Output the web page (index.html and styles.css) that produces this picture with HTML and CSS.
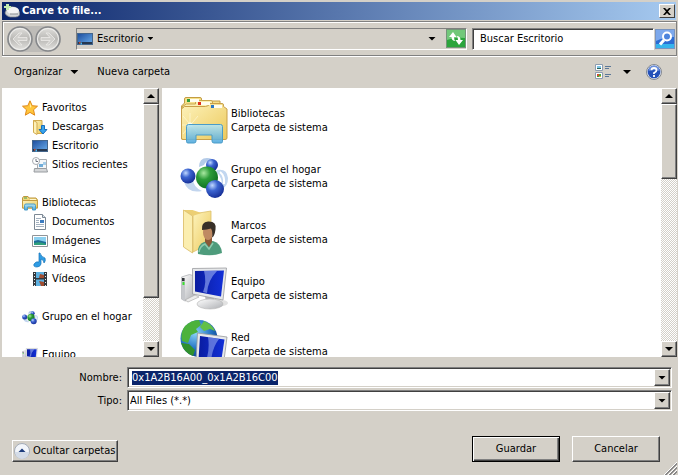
FILE: index.html
```
<!DOCTYPE html>
<html lang="es">
<head>
<meta charset="UTF-8" />
<meta name="viewport" content="width=device-width, initial-scale=1" />
<title>Carve to file...</title>
<link rel="stylesheet" href="styles.css">
</head>
<body>

<svg class="defs" aria-hidden="true">
  <defs>
    <linearGradient id="gFolder" x1="0" y1="0" x2="1" y2="1"><stop offset="0" stop-color="#fdf3bc"/><stop offset="1" stop-color="#ecc95c"/></linearGradient>
    <linearGradient id="gStand" x1="0" y1="0" x2="0" y2="1"><stop offset="0" stop-color="#b8e6f2"/><stop offset="1" stop-color="#4aa6dc"/></linearGradient>
    <linearGradient id="gDesk" x1="0" y1="0" x2="1" y2="1"><stop offset="0" stop-color="#1c4c9c"/><stop offset="1" stop-color="#6cb0ee"/></linearGradient>
    <linearGradient id="gScreen" x1="0" y1="0" x2="1" y2="0"><stop offset="0" stop-color="#0a1ca0"/><stop offset="1" stop-color="#1230d8"/></linearGradient>
    <linearGradient id="gMetal" x1="0" y1="0" x2="1" y2="1"><stop offset="0" stop-color="#ffffff"/><stop offset="1" stop-color="#aeb0b4"/></linearGradient>
    <linearGradient id="gNav" x1="0" y1="0" x2="0" y2="1"><stop offset="0" stop-color="#e2e1de"/><stop offset=".5" stop-color="#b9b8b5"/><stop offset="1" stop-color="#e6e5e2"/></linearGradient>
    <radialGradient id="gGreen" cx=".35" cy=".3" r=".75"><stop offset="0" stop-color="#a8e8a0"/><stop offset=".4" stop-color="#2c9c38"/><stop offset="1" stop-color="#0c6c20"/></radialGradient>
    <radialGradient id="gBlue" cx=".35" cy=".3" r=".75"><stop offset="0" stop-color="#c0d8ff"/><stop offset=".4" stop-color="#3c64d0"/><stop offset="1" stop-color="#142c94"/></radialGradient>
    <radialGradient id="gEarth" cx=".4" cy=".35" r=".7"><stop offset="0" stop-color="#8cd4f8"/><stop offset=".6" stop-color="#2474c4"/><stop offset="1" stop-color="#0c3c88"/></radialGradient>
  </defs>

  <symbol id="i-desktop" viewBox="0 0 16 16">
    <rect x="0.5" y="2.5" width="15" height="11" fill="url(#gDesk)" stroke="#44668c"/>
    <path d="M1 11h14v2H1z" fill="#263850"/>
    <path d="M2 11.500l1.500-1v2H2z" fill="#e04c2c"/><path d="M3.500 11.500H5v2H3.500z" fill="#48b4f0"/>
  </symbol>

  <symbol id="i-library" viewBox="0 0 48 48">
    <path d="M1.500 43V10l3-3V3q0-1.500 1.500-1.500h14q1.500 0 1.500 1.500v2H40v38z" fill="#f6e08a" stroke="#c39c42"/>
    <path d="M1.500 11l5-3h9V6q0-1.500 1.500-1.500h14q1.500 0 1.500 1.500v1.500l10 1.500v10z" fill="#fbefb0" stroke="#c9a64e"/>
    <path d="M1.500 13l3-2.500h21l3-1V9q0-1.500 1.500-1.500h12q1.500 0 1.500 1.500v1.500l3.500 2.500v29q0 1.500-2 1.500H3q-1.500 0-1.500-1.500z" fill="url(#gFolder)" stroke="#c9a04a"/>
    <path d="M7 3h3v3H7z" fill="#2f9c3a"/><path d="M18 6h3v3h-3z" fill="#e0301c"/><path d="M31 9h3v3h-3z" fill="#2a78c4"/>
    <path d="M10 3h9v3h-9zM21 6h9v3h-9zM34 9h8v3h-8z" fill="#fffdf0"/>
    <path d="M10 17v22M2 29h20M3 20l14 16M18 20L3 38" stroke="#fffbe0" stroke-width=".6"/>
    <circle cx="10" cy="29" r="2.500" fill="#fffde8"/>
    <path d="M6.500 45.500V30.500q0-2 2-2h32q2 0 2 2v15q0 1.500-1.500 1.500H34q-2 0-2-2v-6H16v6q0 2-2 2H8q-1.500 0-1.500-1.500z" fill="url(#gStand)" fill-opacity=".88" stroke="#4a9cc8"/>
  </symbol>

  <symbol id="i-library-sm" viewBox="0 0 16 16">
    <path d="M.5 13V3l1-1.500H6l1 1.500h7l1.500 2v8z" fill="#f0d67c" stroke="#bd973e"/>
    <path d="M2 2.500h3v1H2z" fill="#45a550"/><path d="M8 4.500h6" stroke="#fff8d0"/>
    <path d="M.5 5.500h15V13H.5z" fill="url(#gFolder)" stroke="#c39c42"/>
    <path d="M2.500 15V10.500q0-1.500 1.500-1.500h8q1.500 0 1.500 1.500V15h-3v-3h-5v3z" fill="url(#gStand)" stroke="#4a9cc8"/>
  </symbol>

  <symbol id="i-group" viewBox="0 0 48 48">
    <path d="M19 15q0-9 8-9 5 0 7 3-8-1-10 4z" fill="#b4cbe8"/>
    <path d="M4 30q4 12 18 9-9-4-9-12z" fill="#c2d5ee"/>
    <path d="M37 18q10-2 11 8 0 8-6 11 1-12-6-17z" fill="#c2d7f0"/>
    <path d="M40 20q5 4 4 12" fill="none" stroke="#fff" stroke-width="2"/>
    <circle cx="32" cy="13" r="6" fill="url(#gBlue)"/>
    <circle cx="8" cy="24" r="7.500" fill="url(#gBlue)"/>
    <circle cx="27" cy="25.500" r="11" fill="url(#gGreen)"/>
    <circle cx="35" cy="37" r="9" fill="url(#gBlue)"/>
  </symbol>

  <symbol id="i-user" viewBox="0 0 48 48">
    <path d="M13 6l18-3v32l-18 9z" fill="url(#gFolder)" stroke="#dcbf6a" stroke-width=".8"/>
    <path d="M3.500 2h9l9 3-9 3z" fill="#eccf74"/>
    <path d="M3.500 2l9 6v37l-9-6z" fill="#fbeeb0" stroke="#d9ba62" stroke-width=".8"/>
    <path d="M18 46q-1-9 6-12l9-1q8 2 9 12-10 4-24 1z" fill="#4e9c7c"/>
    <path d="M19 44q1-6 6-8l4 5 4-6" fill="none" stroke="#8fcaae" stroke-width="1.500"/>
    <path d="M25 29h7v5l-3 5-4-5z" fill="#8c5836"/>
    <ellipse cx="28" cy="24.500" rx="5" ry="7.500" fill="#bf8a62"/>
    <path d="M22 22q-1-8 6-8.500 9-.5 7.500 8-1 7-3.500 8 1-6-1-9-4 1-9 1.500z" fill="#383028"/>
  </symbol>

  <symbol id="i-computer" viewBox="0 0 48 48">
    <ellipse cx="35" cy="39" rx="13" ry="4" fill="#e2e2e2"/>
    <path d="M1.500 13l8-2.500 5 1.500v22L5 37l-3.500-2z" fill="url(#gMetal)" stroke="#b0b2b6" stroke-width=".8"/>
    <path d="M1.500 13L5 14.500V37l-3.500-2z" fill="#c6c8cc"/><path d="M2 14h2.500v3H2z" fill="#303438"/><path d="M2.500 18h2v3h-2z" fill="#3ce030"/>
    <path d="M5 36l10-5 4 2-11 5z" fill="#ececec" stroke="#a4a4a4" stroke-width=".6"/>
    <path d="M25 32l9 2v5h-8z" fill="#b6b8bc"/>
    <ellipse cx="30" cy="40" rx="13" ry="5" fill="url(#gMetal)" stroke="#b4b4b4" stroke-width=".6"/>
    <path d="M12.500 4.500l34-.5-3.500 32-30.500-6z" fill="#e6e8ea" stroke="#9a9ca0" stroke-width=".8"/>
    <path d="M15 7l29-.5-3 26-26-5z" fill="url(#gScreen)"/>
    <path d="M24 7h13q-9 9-10 22l-4-1q4-10 1-21z" fill="#9cb0f4" fill-opacity=".6"/>
  </symbol>

  <symbol id="i-network" viewBox="0 0 48 48">
    <circle cx="19" cy="18.500" r="18.500" fill="url(#gEarth)"/>
    <path d="M5 6q6-6 14-6l2 5-5 4 2 3-7 3-3 8-6-2Q0 12 5 6z" fill="#4cb23c"/>
    <path d="M24 1q8 3 11 10l-5-2-6 2-4-4z" fill="#62c048"/>
    <path d="M1 23l8 1 6 6-2 6Q4 33 1 23z" fill="#30902c"/>
    <path d="M17.500 13l29.500 4-4 31-27-6z" fill="#e6e8ea" stroke="#96989c" stroke-width=".8"/>
    <path d="M20 16l24.500 3.500-4 26-22-6z" fill="url(#gScreen)"/>
    <path d="M28 17l11 2q-7 9-8 23l-5-1q4-12 2-24z" fill="#9cb0f4" fill-opacity=".55"/>
  </symbol>

  <symbol id="i-star" viewBox="0 0 16 16">
    <path d="M8 .8l2.200 4.900 5.300.5-4 3.600 1.200 5.400L8 12.400l-4.700 2.800 1.200-5.400-4-3.600 5.300-.5z" fill="#ffc63c" stroke="#e08818"/>
    <path d="M8 3l1.400 3.600L8 8z" fill="#fff0a0"/>
  </symbol>

  <symbol id="i-downloads" viewBox="0 0 16 16">
    <path d="M1.500 1.500H10v13H4z" fill="url(#gFolder)" stroke="#d2ab50"/>
    <path d="M1.500 1.500L5 3.500v12l-3.500-2z" fill="#fdf1b8" stroke="#d2ab50"/>
    <path d="M9.500 6.500h3v4h2.500L11 15 7 10.500h2.500z" fill="#36a4ee" stroke="#1a6cba"/>
  </symbol>

  <symbol id="i-recent" viewBox="0 0 16 16">
    <path d="M5.500 2.500h9v9h-9z" fill="#f4f6f8" stroke="#a8acb0"/>
    <path d="M11 5h3v3h-3z" fill="#a4cce8"/><path d="M7 7h4v3H7z" fill="#70acd8"/>
    <path d="M2.500 11.500h12l1 3.500H2z" fill="#d4d6d8" stroke="#989ca0"/>
    <circle cx="4" cy="4" r="3.500" fill="#fff" stroke="#a8acb2"/><path d="M4 2v2.500h2" fill="none" stroke="#6c7480"/>
  </symbol>

  <symbol id="i-documents" viewBox="0 0 16 16">
    <path d="M2.500.5h8l3 3v12h-11z" fill="#fff" stroke="#7c8894"/><path d="M10.500.5v3h3" fill="#dce4ec" stroke="#7c8894"/>
    <path d="M4 4.500h5M4 6.500h3M4 8.500h3M4 10.500h8M4 12.500h8" stroke="#a4b2c0"/><path d="M8 6h4v3H8z" fill="#3c7cc0"/>
  </symbol>

  <symbol id="i-pictures" viewBox="0 0 16 16">
    <path d="M.5 2.500h15v11H.5z" fill="#fff" stroke="#909498"/><path d="M2 4h12v8H2z" fill="#8cd0f0"/>
    <path d="M2 8l4-1 8 2v3H2z" fill="#1e6c98"/><path d="M2 10q6-2 12 1v1H2z" fill="#30a07c"/>
  </symbol>

  <symbol id="i-music" viewBox="0 0 16 16">
    <path d="M8 1q1 4 5 5 1 3-1 5 0-3-3-4v5q-1 3-4 3-4 0-3-3 2-3 5-2V1z" fill="#2e9ce4" stroke="#1874b8" stroke-width=".7"/>
  </symbol>

  <symbol id="i-videos" viewBox="0 0 16 16">
    <path d="M1 1h14v14H1z" fill="#34383c"/><path d="M4 1h8v6H4zM4 8.500h8V15H4z" fill="#5cb0e0"/>
    <path d="M8 3l4 1v3H7zM7 10l5 1v4H9z" fill="#a04c30"/>
    <path d="M2.500 2v13M13.500 2v13" stroke="#e8ecf0" stroke-dasharray="1 2"/>
  </symbol>

  <symbol id="i-disk" viewBox="0 0 16 16">
    <path d="M3 5.500Q8 2 13 5.500l2.500 3.500v3q-1 2-4 2H6Q2 13 1 10z" fill="#d4d6d8" stroke="#86898c" stroke-width=".7"/>
    <ellipse cx="9" cy="7.500" rx="6" ry="3.500" fill="#f4f4f4"/><path d="M6 11h8" stroke="#8c9094"/>
    <path d="M2 1h3v2h2v2H5v2H2V5H0V3h2z" fill="#c4ecb0"/>
  </symbol>
</svg>

<div class="titlebar">
  <svg class="icon-sm"><use href="#i-disk"/></svg>
  <h1>Carve to file...</h1>
  <button class="close" aria-label="Cerrar"><svg width="8" height="7" viewBox="0 0 8 7"><path d="M0 0h2l2 2 2-2h2L5 3.500 8 7H6L4 5 2 7H0l3-3.500z"/></svg></button>
</div>

<div class="navbar">
  <div class="history">
    <button aria-label="Atrás"><svg width="26" height="26" viewBox="0 0 26 26"><circle cx="13" cy="13" r="12" fill="url(#gNav)" stroke="#85878a" stroke-width="1.500"/><circle cx="13" cy="13" r="10.500" fill="none" stroke="#f0f0ee"/><path d="M6 13l6-6h3l-4 4.500h9v3h-9l4 4.500h-3z" fill="#d0cfcc" stroke="#ecebe8" stroke-width=".8"/></svg></button>
    <button aria-label="Adelante"><svg width="26" height="26" viewBox="0 0 26 26"><circle cx="13" cy="13" r="12" fill="url(#gNav)" stroke="#85878a" stroke-width="1.500"/><circle cx="13" cy="13" r="10.500" fill="none" stroke="#f0f0ee"/><path d="M20 13l-6-6h-3l4 4.500H6v3h9L11 19h3z" fill="#d0cfcc" stroke="#ecebe8" stroke-width=".8"/></svg></button>
  </div>
  <div class="address">
    <button class="crumb"><svg class="icon-sm"><use href="#i-desktop"/></svg>Escritorio<span class="caret"></span></button>
    <button class="address-drop" aria-label="Ubicaciones anteriores"><span class="caret wide"></span></button>
    <button class="refresh" aria-label="Actualizar"><svg width="20" height="19" viewBox="0 0 20 19"><rect x=".5" y=".5" width="19" height="18" fill="#2ba53c" stroke="#74947a"/><path d="M1 1h18v8Q9 8 1 11z" fill="#72c87a"/><path d="M7 3L3 8h2.500q0 4 4 4Q8 11 8 8h2.500z" fill="#fff"/><path d="M13 16l4-5h-2.500q0-4-4-4Q12 8 12 11H9.500z" fill="#fff"/></svg></button>
  </div>
  <input class="search" type="text" aria-label="Buscar" value="Buscar Escritorio">
  <button class="search-go" aria-label="Buscar"><svg width="20" height="20" viewBox="0 0 20 20"><rect x=".5" y=".5" width="19" height="19" fill="#2a6cd4" stroke="#7894c0"/><path d="M1 1h18v7Q9 8 1 12z" fill="#7ca8ec"/><path d="M1 15h18v4H1z" fill="#35b4ec"/><circle cx="12" cy="7.500" r="4" fill="#4c84dc" stroke="#fff" stroke-width="2"/><path d="M9 11l-4 4.500" stroke="#fff" stroke-width="3"/></svg></button>
</div>

<div class="toolbar">
  <button>Organizar<span class="caret wide"></span></button>
  <button>Nueva carpeta</button>
  <button class="view" aria-label="Cambiar la vista"><svg width="16" height="16" viewBox="0 0 16 16"><path d="M.5.500h7v6h-7zM.5 8.500h7v6h-7z" fill="#fff" stroke="#8c9cb0"/><path d="M2 2h4v2H2z" fill="#7cc4e8"/><path d="M2 4h4v1H2z" fill="#2c6454"/><path d="M2 10h2v2H2z" fill="#d84830"/><path d="M4 10h2v2H4z" fill="#48a840"/><path d="M2 12h2v1H2z" fill="#38a044"/><path d="M4 12h2v1H4z" fill="#e0b030"/><path d="M10 2.500h6M10 4.500h4M10 10.500h6M10 12.500h4" stroke="#5c7898"/></svg></button>
  <button class="view-drop" aria-label="Más opciones"><span class="caret wide"></span></button>
  <button class="help" aria-label="Ayuda"><svg width="16" height="16" viewBox="0 0 16 16"><circle cx="8" cy="8" r="7.500" fill="#dce4f4" stroke="#84888e"/><circle cx="8" cy="8" r="6.300" fill="#2450b8"/><path d="M2.500 7a5.500 5.500 0 0 1 11 0q-6-2-11 0z" fill="#6c90dc"/><path d="M5.500 6.200Q5.500 4 8 4t2.500 2.200Q10.500 7.500 8 9v1M8 11v2" fill="none" stroke="#fff" stroke-width="1.800"/></svg></button>
</div>

<main class="panes">
  <nav class="pane places">
    <div class="scrolled">
      <ul>
        <li><a href="#"><svg class="icon-sm"><use href="#i-star"/></svg>Favoritos</a></li>
        <li class="sub"><a href="#"><svg class="icon-sm"><use href="#i-downloads"/></svg>Descargas</a></li>
        <li class="sub"><a href="#"><svg class="icon-sm"><use href="#i-desktop"/></svg>Escritorio</a></li>
        <li class="sub"><a href="#"><svg class="icon-sm"><use href="#i-recent"/></svg>Sitios recientes</a></li>
      </ul>
      <ul>
        <li><a href="#"><svg class="icon-sm"><use href="#i-library-sm"/></svg>Bibliotecas</a></li>
        <li class="sub"><a href="#"><svg class="icon-sm"><use href="#i-documents"/></svg>Documentos</a></li>
        <li class="sub"><a href="#"><svg class="icon-sm"><use href="#i-pictures"/></svg>Imágenes</a></li>
        <li class="sub"><a href="#"><svg class="icon-sm"><use href="#i-music"/></svg>Música</a></li>
        <li class="sub"><a href="#"><svg class="icon-sm"><use href="#i-videos"/></svg>Vídeos</a></li>
      </ul>
      <ul>
        <li><a href="#"><svg class="icon-sm"><use href="#i-group"/></svg>Grupo en el hogar</a></li>
      </ul>
      <ul>
        <li><a href="#"><svg class="icon-sm"><use href="#i-computer"/></svg>Equipo</a></li>
      </ul>
    </div>
    <div class="scrollbar">
      <button class="raised" aria-label="Subir"><span class="caret up"></span></button>
      <div class="thumb-long raised"></div>
      <button class="raised last" aria-label="Bajar"><span class="caret wide"></span></button>
    </div>
  </nav>

  <section class="pane files">
    <div class="scrolled">
      <a class="file" href="#"><svg class="icon-lg"><use href="#i-library"/></svg><span>Bibliotecas<br>Carpeta de sistema</span></a>
      <a class="file" href="#"><svg class="icon-lg"><use href="#i-group"/></svg><span>Grupo en el hogar<br>Carpeta de sistema</span></a>
      <a class="file" href="#"><svg class="icon-lg"><use href="#i-user"/></svg><span>Marcos<br>Carpeta de sistema</span></a>
      <a class="file" href="#"><svg class="icon-lg"><use href="#i-computer"/></svg><span>Equipo<br>Carpeta de sistema</span></a>
      <a class="file" href="#"><svg class="icon-lg"><use href="#i-network"/></svg><span>Red<br>Carpeta de sistema</span></a>
    </div>
    <div class="scrollbar">
      <button class="raised" aria-label="Subir"><span class="caret up"></span></button>
      <div class="thumb-short raised"></div>
      <button class="raised last" aria-label="Bajar"><span class="caret wide"></span></button>
    </div>
  </section>
</main>

<form class="fields">
  <label for="fileName">Nombre:</label>
  <div class="combo">
    <input id="fileName" type="text" value="0x1A2B16A00_0x1A2B16C00" spellcheck="false" autocomplete="off">
    <button type="button" class="raised" aria-label="Nombres anteriores"><span class="caret wide"></span></button>
  </div>
  <label for="fileType">Tipo:</label>
  <div class="combo">
    <select id="fileType"><option>All Files (*.*)</option></select>
    <span class="raised drop"><span class="caret wide"></span></span>
  </div>
</form>

<footer>
  <button class="raised hide-folders"><svg width="16" height="16" viewBox="0 0 16 16"><circle cx="8" cy="8" r="7.500" fill="#f2f5fa" stroke="#a4acb8"/><path d="M1 9h14a7 7 0 0 1-14 0z" fill="#d4dce8"/><path d="M4.500 9L8 5.500 11.500 9z" fill="#1c3c7c"/></svg>Ocultar carpetas</button>
  <button class="raised action default">Guardar</button>
  <button class="raised action">Cancelar</button>
  <svg class="grip" width="13" height="13" viewBox="0 0 13 13"><path d="M0 13L13 0M4 13l9-9M8 13l5-5" stroke="#fff"/><path d="M1 13L13 1M2 13L13 2M5 13l8-8M6 13l7-7M9 13l4-4M10 13l3-3" stroke="#808080" stroke-width=".9"/></svg>
</footer>

<script>
  // the proposed name comes up selected, ready to be typed over
  const fileName = document.getElementById("fileName");
  fileName.focus();
  fileName.select();
</script>

</body>
</html>
```
FILE: styles.css
```
* {
  box-sizing: border-box;
}
body {
  margin: 0;
  padding: 2px 1px 0 2px;
  height: 100vh;
  display: flex;
  flex-direction: column;
  background: #d4d0c8;
  color: #000;
  font: 11px/14px Tahoma, "DejaVu Sans Condensed", "DejaVu Sans", sans-serif;
}
button, input, select {
  font: inherit;
  color: inherit;
  margin: 0;
  padding: 0;
  border: none;
  border-radius: 0;
  background: none;
  outline: none;
}
button {
  display: flex;
  align-items: center;
  flex-shrink: 0;
}
a {
  color: inherit;
  text-decoration: none;
}
svg {
  display: block;
  flex-shrink: 0;
}
.defs {
  position: absolute;
  width: 0;
  height: 0;
}
.icon-sm {
  width: 16px;
  height: 16px;
}
.icon-lg {
  width: 48px;
  height: 48px;
}
.raised {
  background: #d4d0c8;
  border: 1px solid;
  border-color: #fff #404040 #404040 #fff;
  box-shadow: inset -1px -1px #808080;
}
.caret {
  width: 6px;
  height: 3px;
  background: #000;
  clip-path: polygon(0 0, 100% 0, 50% 100%);
}
.caret.wide {
  width: 8px;
  height: 4px;
}
.caret.up {
  width: 8px;
  height: 4px;
  clip-path: polygon(50% 0, 100% 100%, 0 100%);
}

/* title bar */
.titlebar {
  display: flex;
  align-items: center;
  height: 18px;
  margin-right: 1px;
  padding: 0 1px 0 2px;
  background: linear-gradient(to right, #0a246a, #a6caf0);
  flex-shrink: 0;
}
.titlebar h1 {
  flex: 1;
  margin: 0 0 0 2px;
  font-size: 11px;
  color: #fff;
}
.close {
  width: 16px;
  height: 14px;
  justify-content: center;
  background: #d4d0c8;
  border: 1px solid;
  border-color: #fff #404040 #404040 #fff;
}

/* navigation bar */
.navbar {
  display: flex;
  align-items: center;
  height: 35px;
  margin-top: 1px;
  padding: 0 1px 0 4px;
  border: 1px solid #808080;
  box-shadow: inset 1px 1px #fff, 0 1px #fff;
  flex-shrink: 0;
}
.history {
  display: flex;
  gap: 2px;
  margin-right: 15px;
  border-radius: 13px;
  background: #bebcb8;
}
.address {
  display: flex;
  align-items: center;
  flex: 1;
  height: 22px;
  border: 1px solid;
  border-color: #808080 #fff #fff #808080;
}
.crumb {
  gap: 4px;
}
.address-drop {
  margin-left: auto;
  padding: 6px 10px;
}
.search {
  width: 182px;
  height: 22px;
  margin-left: 5px;
  padding: 0 7px;
  background: #fff;
  border: 1px solid;
  border-color: #808080 #fff #fff #808080;
  box-shadow: inset 1px 1px #404040;
}
.search-go {
  margin-left: 1px;
}

/* toolbar */
.toolbar {
  display: flex;
  align-items: center;
  height: 32px;
  padding: 0 15px 0 12px;
  gap: 19px;
  flex-shrink: 0;
}
.toolbar .caret {
  margin-left: 8px;
}
.toolbar .view {
  margin-left: auto;
}
.toolbar .view-drop {
  margin-left: -15px;
}
.toolbar .help {
  margin-left: -4px;
}

/* panes */
.panes {
  display: flex;
  flex: 1;
  gap: 3px;
  min-height: 0;
}
.pane {
  display: flex;
  background: #fff;
  overflow: hidden;
}
.places {
  width: 157px;
}
.files {
  flex: 1;
}
.scrolled {
  flex: 1;
  overflow: hidden;
}
.places .scrolled {
  padding: 10px 0 0 20px;
}
.places ul {
  list-style: none;
  margin: 0 0 19px;
  padding: 0;
}
.places a {
  display: flex;
  align-items: center;
  gap: 4px;
  height: 19px;
  white-space: nowrap;
}
.places .sub {
  padding-left: 10px;
}
.files .scrolled {
  padding: 4px 0 0 18px;
}
.file {
  display: flex;
  align-items: center;
  gap: 3px;
  height: 56px;
}
.file span {
  padding-top: 2px;
}
.scrollbar {
  display: flex;
  flex-direction: column;
  width: 16px;
  background: repeating-conic-gradient(#fff 0 25%, #d4d0c8 0 50%) 0 0 / 2px 2px;
}
.scrollbar button {
  width: 16px;
  height: 16px;
  justify-content: center;
}
.scrollbar .last {
  margin-top: auto;
}
.thumb-long {
  height: 72%;
}
.thumb-short {
  height: 28%;
}

/* file name and type */
.fields {
  display: grid;
  grid-template-columns: 120px 1fr;
  column-gap: 5px;
  row-gap: 2px;
  align-items: center;
  padding: 10px 5px 0 0;
}
.fields label {
  text-align: right;
}
.combo {
  display: flex;
  height: 21px;
  padding: 1px;
  background: #fff;
  border: 1px solid;
  border-color: #808080 #fff #fff #808080;
  box-shadow: inset 1px 1px #404040, inset -1px -1px #d4d0c8;
}
.combo input,
.combo select {
  flex: 1;
  min-width: 0;
  padding-left: 3px;
  appearance: none;
}
.combo select {
  padding-left: 1px;
}
.combo input::selection {
  background: #0a246a;
  color: #fff;
}
.combo button,
.drop {
  display: flex;
  align-items: center;
  justify-content: center;
  width: 16px;
}

/* buttons */
footer {
  display: flex;
  align-items: flex-end;
  height: 64px;
  padding: 0 0 13px 10px;
  gap: 12px;
  flex-shrink: 0;
}
.hide-folders {
  height: 22px;
  padding: 0 2px 0 1px;
  gap: 3px;
  margin-right: auto;
}
.action {
  width: 88px;
  height: 26px;
  justify-content: center;
}
.default {
  border-color: #000;
  box-shadow: inset 1px 1px #fff, inset -1px -1px #404040, inset -2px -2px #808080;
}
.grip {
  margin: 0 0 -13px -8px;
}
```
